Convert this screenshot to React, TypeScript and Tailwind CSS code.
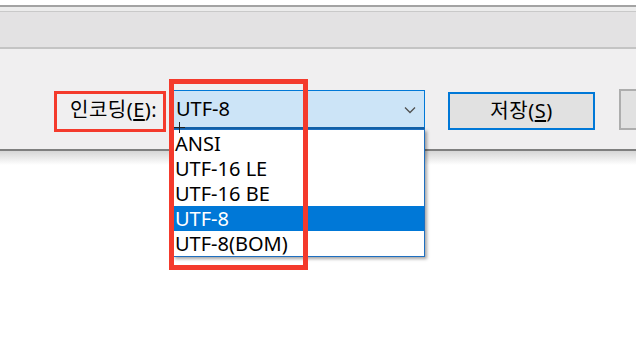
import React from "react";

const font = { fontFamily: '"Noto Sans", "Noto Sans CJK KR", sans-serif' };

export default function App() {
  const items = ["ANSI", "UTF-16 LE", "UTF-16 BE", "UTF-8", "UTF-8(BOM)"];
  return (
    <div
      className="relative w-[636px] h-[348px] overflow-hidden bg-white text-black"
      style={font}
    >
      <div className="h-[5px] bg-white" />
      <div className="h-[2px] bg-[#a3a3a3]" />
      <div className="h-[4px] bg-[#ececec]" />
      <div className="h-[1px] bg-[#c9c9c9]" />
      <div className="h-[35px] bg-[#e3e2e3]" />
      <div className="h-[2px] bg-[#c4c4c4]" />
      <div className="h-[100px] bg-[#f0eff0] flex items-start pt-[41px] pl-[70px]">
        <div className="w-[103px] h-[39px] shrink-0 flex items-center text-[20px] tracking-[0.5px] leading-none whitespace-nowrap">
          인코딩(<span className="underline underline-offset-2">E</span>):
        </div>
        <div className="relative w-[252px] h-[39px] shrink-0 border border-[#0078d7] border-b-2 border-b-[#1461a8] bg-[#cce4f7] flex items-center pl-[2px] text-[20px] leading-none">
          <span>UTF-8</span>
          <svg
            className="absolute right-[8px] top-[15px]"
            width="12"
            height="8"
            viewBox="0 0 12 8"
          >
            <path d="M1 1.5 L6 6.5 L11 1.5" fill="none" stroke="#505050" strokeWidth="1.3" />
          </svg>
          <div className="absolute left-[-1px] top-[38px] w-[252px] bg-white border border-[#1e6fc0] shadow-[2px_2px_3px_rgba(0,0,0,0.35)] pt-[1px]">
            {items.map((it) => (
              <div
                key={it}
                className={
                  it === "UTF-8"
                    ? "h-[25px] flex items-center pl-[1px] text-[20px] leading-none bg-[#0078d7] text-white"
                    : "h-[25px] flex items-center pl-[1px] text-[20px] leading-none"
                }
              >
                {it}
              </div>
            ))}
          </div>
        </div>
        <div className="ml-[23px] mt-[2px] w-[147px] h-[38px] shrink-0 border-2 border-[#0078d7] bg-[#e1e1e1] flex items-center justify-center text-[20px] tracking-[0.5px] leading-none">
          저장(<span className="underline underline-offset-2">S</span>)
        </div>
        <div className="ml-[24px] mt-[-1px] w-[60px] h-[41px] shrink-0 border-2 border-[#adadad] bg-[#e1e1e1]" />
      </div>
      <div className="h-[2px] bg-[#7f7f7f]" />
      <div className="h-[14px] bg-gradient-to-b from-[#d6d6d6] to-white" />

      {/* cursor */}
      <svg className="absolute left-[174px] top-[122px]" width="11" height="11" viewBox="0 0 11 11">
        <path d="M5.5 0 V11 M0 5.5 H11" stroke="#222" strokeWidth="1" />
      </svg>

      {/* red annotation boxes */}
      <div className="absolute left-[54px] top-[91px] w-[112px] h-[41px] border-[3px] border-[#f43a2c]" />
      <div className="absolute left-[169px] top-[79px] w-[139px] h-[191px] border-[5px] border-[#f43a2c]" />
    </div>
  );
}
